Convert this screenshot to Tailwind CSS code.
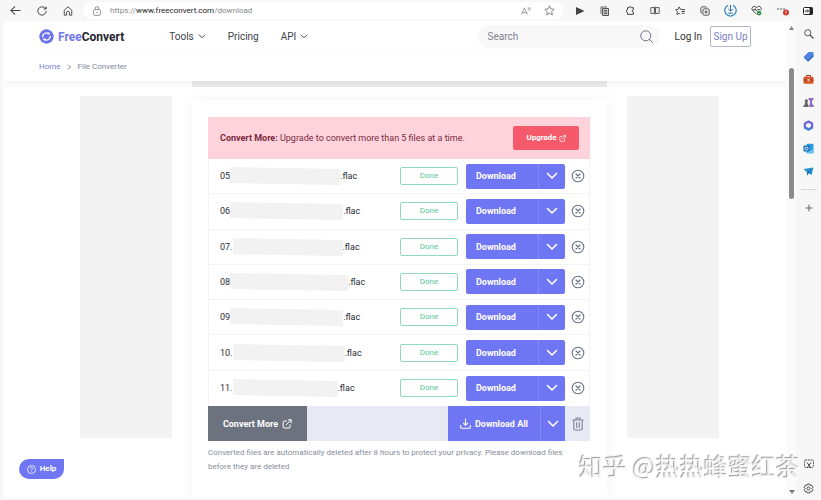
<!DOCTYPE html>
<html lang="en">
<head>
<meta charset="utf-8">
<title>FreeConvert – File Converter</title>
<script src="https://cdn.jsdelivr.net/npm/@tailwindcss/browser@4"></script>
</head>
<body class="h-screen overflow-hidden flex flex-col bg-[#f7f7f7] font-['Roboto',sans-serif] text-[#3d4148] text-[9px] leading-3">
<svg class="hidden">
  <symbol id="down" viewBox="0 0 12 8"><path d="M1.5 1.5 6 6l4.500-4.500" fill="none" stroke="currentColor" stroke-width="1.600" stroke-linecap="round" stroke-linejoin="round"/></symbol>
  <symbol id="close" viewBox="0 0 14 14"><g fill="none" stroke="currentColor" stroke-linecap="round"><circle cx="7" cy="7" r="5.800" stroke-width="1.100"/><path d="m5 5 4 4m0-4-4 4" stroke-width="1.200"/></g></symbol>
  <symbol id="ext" viewBox="0 0 12 12"><path d="M5.500 2.500H2.600a1.200 1.200 0 0 0-1.200 1.200v5.900a1.200 1.200 0 0 0 1.200 1.200h5.900a1.200 1.200 0 0 0 1.200-1.200V6.700M5 7l6-6M7.500 1H11v3.500" fill="none" stroke="currentColor" stroke-width="1.200" stroke-linecap="round" stroke-linejoin="round"/></symbol>
</svg>

<!-- Browser toolbar -->
<div class="h-[21px] shrink-0 flex items-center pr-2 pl-[10px] text-[#444]">
  <div class="flex items-center gap-4 shrink-0">
    <button aria-label="Back"><svg class="size-[11px] block" viewBox="0 0 12 12"><path d="M11.500 6H1m4.500-4.500L1 6l4.500 4.500" fill="none" stroke="currentColor" stroke-width="1.100"/></svg></button>
    <button aria-label="Reload"><svg class="size-[10px] block" viewBox="0 0 12 12"><path d="M11 6a5 5 0 1 1-1.600-3.700L11 3.500M11 .5v3H8" fill="none" stroke="currentColor" stroke-width="1.200"/></svg></button>
    <button aria-label="Home"><svg class="size-[10px] block" viewBox="0 0 12 12"><path d="M1.500 5 6 1l4.500 4v6H7.700V8A1.700 1.700 0 0 0 4.300 8v3H1.500z" fill="none" stroke="currentColor" stroke-width="1.100" stroke-linejoin="round"/></svg></button>
  </div>
  <div class="flex-1 ml-[10px] h-[17px] rounded-full bg-white flex items-center pl-[10px] pr-2 gap-[9px] min-w-0">
    <svg class="w-2 h-[10px] shrink-0 text-[#888]" viewBox="0 0 8 10"><g fill="none" stroke="currentColor" stroke-width=".9"><rect x=".6" y="3.500" width="6.800" height="5.800" rx="1"/><path d="M2.300 3.500V2.300a1.700 1.700 0 0 1 3.400 0v1.200"/></g><circle cx="4" cy="6.400" r=".7" fill="currentColor"/></svg>
    <div role="textbox" aria-label="Address" class="flex-1 text-[8px] text-[#888] whitespace-nowrap">https://<span class="text-[#222]">www.freeconvert.com</span>/download</div>
    <button class="text-[#888] mr-1" aria-label="Read aloud"><svg class="w-[10px] h-2 block" viewBox="0 0 10 8"><path d="M.5 7.500 3.400.8l2.900 6.700M1.500 5.400h3.800M7 .5q1 1 0 2.500M8.500.2q1.400 1.500 0 3.500" fill="none" stroke="currentColor" stroke-width=".8"/></svg></button>
    <button class="text-[#777]" aria-label="Favourite"><svg class="size-[11px] block" viewBox="0 0 12 12"><path d="m6 1 1.500 3.200 3.500.5-2.500 2.500.6 3.500L6 9l-3.100 1.700.6-3.500L1 4.700l3.500-.5z" fill="none" stroke="currentColor" stroke-linejoin="round"/></svg></button>
  </div>
  <div class="flex items-center gap-[15px] ml-3 shrink-0">
    <svg class="size-[10px]" viewBox="0 0 10 10"><path d="M1 1v8l8.500-4z" fill="#444"/></svg>
    <svg class="size-[10px]" viewBox="0 0 10 10"><path d="M2.500 2.500h6v7h-6z" fill="#ccc" stroke="#555"/><path d="M7 1H1v7M4 4.500h3M4 6h3M4 7.500h3" fill="none" stroke="#555" stroke-width=".9"/></svg>
    <svg class="size-[10px]" viewBox="0 0 12 12"><path d="M3 2h2a1.300 1.300 0 0 1 2.600 0H10v2.500a1.500 1.500 0 0 0 0 3V10H3V7.700a1.500 1.500 0 1 1 0-3z" fill="none" stroke="currentColor" stroke-width="1.200" stroke-linejoin="round"/></svg>
    <svg class="w-[10px] h-[9px]" viewBox="0 0 12 10"><path d="M1 1.500h4.300v7H1zM6.700 1.500H11v7H6.700zM6 .2v9.600" fill="none" stroke="currentColor" stroke-width="1"/></svg>
    <svg class="size-[10px]" viewBox="0 0 12 12"><path d="M7.500 4.300 8 4H6.800L5 1 3.700 4 .8 4.500l2.100 2.200-.6 3.500L5 8.700l1.200.8M8 4.300h4M7.500 6.500H12M8 8.700h3.500" fill="none" stroke="currentColor" stroke-width="1.100" stroke-linejoin="round"/></svg>
    <svg class="size-[10px]" viewBox="0 0 12 12"><g fill="none" stroke="currentColor" stroke-width="1.100"><rect x="3.500" y="3.500" width="7.500" height="7.500" rx="1.500"/><path d="M2.500 8.500A1.500 1.500 0 0 1 1 7V3a2 2 0 0 1 2-2h3.500a1.500 1.500 0 0 1 1.600 1M7.200 5.300V9.200M5.300 7.200h4"/></g></svg>
    <svg class="size-[13px] -mx-px" viewBox="0 0 13 13"><path d="M4 1.300a5.700 5.700 0 1 0 5 0" fill="none" stroke="#2d86c4" stroke-width="1.200"/><path d="M6.500 1v6M4.300 5l2.200 2.200L8.700 5M4.200 9.200h4.600" fill="none" stroke="#2d75ad"/></svg>
    <svg class="size-[11px]" viewBox="0 0 12 12"><path d="M6 10 1.700 5.800a2.500 2.500 0 0 1 3.800-3.500L6 3l.7-.7a2.500 2.500 0 0 1 3.800 3.300M1.500 5.500h2l1-1.500 1.200 2.500L7 5h3" fill="none" stroke="currentColor"/><circle cx="8.800" cy="8.800" r="2.600" fill="#2f8d48"/><path d="m7.600 8.800.9.900 1.500-1.700" fill="none" stroke="#fff" stroke-width=".6"/></svg>
    <svg class="w-3 h-[13px] -mr-px" viewBox="0 0 12 13"><g fill="#444"><circle cx="1" cy="5" r=".8"/><circle cx="4" cy="5" r=".8"/><circle cx="7" cy="5" r=".8"/></g><circle cx="9" cy="8.500" r="3" fill="#cb3a2e"/><path d="M9 6.800v2M9 9.500v.7" stroke="#fff" stroke-width=".8"/></svg>
    <svg class="w-[10px] h-2" viewBox="0 0 10 8"><rect x=".5" y=".5" width="9" height="7" rx="1" fill="#fff" stroke="#222"/><path d="M6.500.5h3v7h-3z" fill="#222"/><path d="M1.500 4h4M4 2.500 5.500 4 4 5.500" fill="none" stroke="#222" stroke-width=".9"/></svg>
  </div>
</div>

<div class="flex-1 min-h-0 flex pl-[3px] pb-[2px]">
  <!-- Web page -->
  <div class="relative flex-1 min-w-0 bg-white rounded-md overflow-hidden flex flex-col">
    <header class="relative z-10 bg-white shadow-[0_2px_8px_rgba(0,0,0,0.07)] pr-[45px] pl-9 shrink-0">
      <div class="h-8 flex items-center border-b border-[#fafafa] text-[10px]">
        <a href="#" class="flex items-center gap-1 text-[12px] font-bold text-[#23252d]">
          <svg class="size-[15px]" viewBox="0 0 15 15"><circle cx="7.500" cy="7.500" r="7.200" fill="#6c72ee"/><path d="M3.600 8.200a4 4 0 0 1 6-3.700M11.400 6.800a4 4 0 0 1-6 3.700" fill="none" stroke="#fff" stroke-width="1.300"/><path d="m9 3 2.500 2-3 .8zM6 12 3.500 10l3-.8z" fill="#fff"/></svg>
          <span><span class="text-[#7177ee]">Free</span>Convert</span>
        </a>
        <nav class="flex ml-[45px] gap-[22px]">
          <a href="#" class="flex items-center gap-1">Tools <svg class="w-2 h-[5px]"><use href="#down"/></svg></a>
          <a href="#">Pricing</a>
          <a href="#" class="flex items-center gap-1">API <svg class="w-2 h-[5px]"><use href="#down"/></svg></a>
        </nav>
        <div class="ml-auto w-[182px] h-[23px] rounded-full bg-[#f8f8f9] flex items-center pl-[10px] pr-[7px]">
          <input aria-label="Search" placeholder="Search" class="flex-1 min-w-0 bg-transparent outline-none placeholder:text-[#7d828e]">
          <button aria-label="Search"><svg class="size-[13px] block text-[#6b7280]" viewBox="0 0 13 13"><circle cx="5.800" cy="5.800" r="5" fill="none" stroke="currentColor"/><path d="m9.400 9.400 3 3" stroke="currentColor" stroke-linecap="round"/></svg></button>
        </div>
        <a href="#" class="ml-[15px] text-[#333]">Log In</a>
        <button class="ml-2 w-[41px] h-[21px] border border-[#b4b5c4] rounded-xs text-[#7b80c8]">Sign Up</button>
      </div>
      <div class="h-7 flex items-center gap-[6px] text-[8px] text-[#7f879c]">
        <a href="#" class="text-[#7a7fcf]">Home</a>
        <svg class="w-[5px] h-[6px]" viewBox="0 0 5 6"><path d="m1 .5 2.500 2.500L1 5.500" fill="none" stroke="currentColor"/></svg>
        <span>File Converter</span>
      </div>
    </header>

    <div class="w-[415px] h-[6px] bg-[#ececec] mx-auto shrink-0"></div>
    <main class="flex-1 flex justify-center gap-5 bg-white">
      <aside class="w-[92px] h-[342px] mt-[9px] bg-[#f3f3f3]"></aside>
      <section class="w-[415px] mt-[13px] mb-px pt-[17px] pl-4 pr-[17px] bg-white shadow-[0_0_16px_rgba(0,0,0,0.05)]">
        <div class="h-[42px] bg-[#fed3dc] flex items-center justify-between pl-3 pr-[11px] text-[#7a2940]">
          <p><b>Convert More:</b> Upgrade to convert more than 5 files at a time.</p>
          <button class="w-[66px] h-6 rounded-xs bg-[#f55a6b] text-white text-[8px] font-bold flex items-center justify-center gap-[2px]">Upgrade <svg class="size-[7px]"><use href="#ext"/></svg></button>
        </div>
        <ul id="files" class="h-[247px] grid grid-rows-7 border-x border-[#f4f4f5] divide-y divide-[#f4f4f5]"></ul>
        <div class="h-[35px] bg-[#e7e9f4] flex">
          <button class="w-[99px] bg-[#6c727e] text-white font-bold flex items-center justify-center gap-1">Convert More <svg class="size-[10px]"><use href="#ext"/></svg></button>
          <div class="ml-auto flex bg-[#6f76f3] text-white">
            <button class="w-[92px] font-bold flex items-center justify-center gap-1"><svg class="size-[11px]" viewBox="0 0 11 11"><path d="M5.500.8v6.400M3.200 5l2.300 2.300L7.800 5M.7 7v2.200q0 1 1 1h7.600q1 0 1-1V7" fill="none" stroke="currentColor" stroke-width="1.100"/></svg>Download All</button>
            <button class="w-[25px] border-l border-[#858bf6] flex items-center justify-center" aria-label="More download options"><svg class="w-3 h-2"><use href="#down"/></svg></button>
          </div>
          <button class="w-[25px] flex items-center justify-center text-[#7b8194]" aria-label="Delete all"><svg class="w-3 h-[14px]" viewBox="0 0 12 14"><path d="M.8 3h10.400M4 3V1h4v2M1.800 3v8.800q0 1.200 1.200 1.200h6q1.200 0 1.200-1.200V3M4.700 5.500v5M7.300 5.500v5" fill="none" stroke="currentColor" stroke-width="1.100" stroke-linecap="round"/></svg></button>
        </div>
        <p class="mt-[5px] pr-5 text-[8px] leading-[14px] text-[#868d9b]">Converted files are automatically deleted after 8 hours to protect your privacy. Please download files before they are deleted</p>
      </section>
      <aside class="w-[92px] h-[342px] mt-[9px] bg-[#f3f3f3]"></aside>
    </main>

    <button class="absolute z-20 left-4 bottom-[19px] w-[45px] h-5 rounded-full rounded-tr-xs bg-[#6f76f3] text-white text-[8px] font-bold flex items-center justify-center gap-1">
      <svg class="size-[9px]" viewBox="0 0 9 9"><circle cx="4.500" cy="4.500" r="4" fill="none" stroke="#fff" stroke-width=".8"/><path d="M3.300 3.600a1.200 1.200 0 1 1 1.800 1q-.6.300-.6.900M4.500 6.300v.6" fill="none" stroke="#fff" stroke-width=".8"/></svg>Help
    </button>
    <!-- Scrollbar -->
    <div class="absolute z-20 right-0 inset-y-0 w-[9px] bg-[#fbfbfb] flex flex-col items-center">
      <svg class="w-[5px] h-1 mt-[5px]" viewBox="0 0 5 4"><path d="M2.500 0 5 4H0z" fill="#888"/></svg>
      <div class="w-[5px] h-[131px] mt-[38px] rounded-full bg-[#8b8b8b]"></div>
      <svg class="w-[6px] h-1 mt-auto mb-1" viewBox="0 0 6 4"><path d="M3 4 6 0H0z" fill="#777"/></svg>
    </div>
  </div>

  <!-- Browser sidebar -->
  <aside class="w-[25px] shrink-0 flex flex-col items-center gap-3 pt-2 pb-1 text-[#555]">
    <svg class="size-[10px] shrink-0" viewBox="0 0 10 10"><circle cx="3.800" cy="3.800" r="3.100" fill="none" stroke="currentColor"/><path d="m6 6 3.500 3.500" stroke="currentColor" stroke-width="1.200"/></svg>
    <svg class="size-[11px] shrink-0" viewBox="0 0 11 11"><path d="M5.500 1h4.200q.8 0 .8.800V5.500L5.800 10q-.7.700-1.400 0L1 6.800q-.7-.7 0-1.400z" fill="#4e83dd"/><path d="M1 6.800 4.400 10q.7.700 1.400 0l4.700-4.500V4L5 9z" fill="#3767b8"/></svg>
    <svg class="size-[11px] shrink-0" viewBox="0 0 11 11"><path d="M3.500 3V1.500h4V3" fill="none" stroke="#8a3a1b"/><rect x=".5" y="2.800" width="10" height="7" rx="1" fill="#d9552a"/><path d="M.5 5.600h10v.9H.5z" fill="#9c3516"/><path d="M4.500 5h2v2.200h-2z" fill="#f0c9a8"/></svg>
    <svg class="size-[11px] shrink-0" viewBox="0 0 11 11"><circle cx="3.300" cy="4" r="1.700" fill="#666"/><path d="M2.300 5h2l.7 3h.6v2H.5V8h1z" fill="#666"/><path d="M5.500 1h5v1.500L9 4v2l1 2h.7v2H6.300V8L7 6V4L5.500 2.500z" fill="#9469c7"/></svg>
    <svg class="size-[11px] shrink-0" viewBox="0 0 11 11"><path d="m5.500 1.500 3.600 2v4l-3.600 2-3.600-2v-4z" fill="none" stroke="#6c63d6" stroke-width="2.200" stroke-linejoin="round"/><path d="m1.900 7.500 3.600 2 3.600-2" fill="none" stroke="#437fd9" stroke-width="2.200" stroke-linejoin="round"/></svg>
    <svg class="size-[11px] shrink-0" viewBox="0 0 11 11"><rect x="3.500" y=".8" width="7" height="9.400" rx="1" fill="#2c9be0"/><path d="m3.500 6 3.500 2 3.500-2v3.500q0 .7-.8.700H3.500z" fill="#66c6f3"/><rect x=".5" y="2.500" width="6" height="6" rx=".8" fill="#116db8"/><circle cx="3.500" cy="5.500" r="1.500" fill="none" stroke="#fff" stroke-width=".9"/></svg>
    <svg class="size-[11px] shrink-0" viewBox="0 0 11 11"><path d="M.5 3 10.500 1.500 8.500 9 5.500 7.300 4 9.500V6.300z" fill="#2590cf"/><path d="M4 6.300 8.500 3 5.500 7.300 4 9.500z" fill="#176b9f"/></svg>
    <hr class="w-4 border-[#d5d5d5]">
    <svg class="size-[8px] mt-[2px] shrink-0" viewBox="0 0 8 8"><path d="M4 .5v7M.5 4h7" stroke="currentColor" stroke-width=".9"/></svg>
    <svg class="size-[10px] mt-auto shrink-0" viewBox="0 0 10 10"><rect x=".6" y="1" width="8.800" height="7.500" rx="1" fill="none" stroke="#444" stroke-dasharray="1.600 .8"/><path d="m3 3.500 4 5.500M7 3.500 3 9" stroke="#444"/></svg>
    <svg class="size-[11px] mt-[2px] shrink-0" viewBox="0 0 12 12"><path d="m4.600 1.200h2.800l.4 1.500 1.500-.4 1.500 2.400L9.700 6l1.100 1.300-1.500 2.400-1.500-.4-.4 1.500H4.600l-.4-1.500-1.500.4-1.500-2.400L2.300 6 1.200 4.700l1.500-2.400 1.500.4z" fill="none" stroke="#444" stroke-linejoin="round"/><circle cx="6" cy="6" r="1.700" fill="none" stroke="#444"/></svg>
  </aside>
</div>

<div class="fixed z-30 right-[21px] bottom-4 font-['Noto_Sans_CJK_SC',sans-serif] text-[24px] leading-9 font-medium whitespace-nowrap text-white/80 [text-shadow:-1px_-1px_1px_rgba(90,90,90,0.6)]">知乎 @热热蜂蜜红茶</div>

<script>
const files = [["05", 110], ["06", 113], ["07.", 110], ["08", 118], ["09", 113], ["10.", 112], ["11.", 105]];
document.getElementById("files").innerHTML = files.map(([n, w]) => `
  <li class="flex items-center pl-[11px] pr-1 text-[#2b2d33]">
    <span>${n}</span><span class="h-4 bg-[#f2f2f2] rotate-1" style="width:${w}px"></span><span>.flac</span>
    <span class="ml-auto w-[58px] h-[18px] rounded-xs border border-[#8fdcb9] text-[#55c794] text-[8px] flex items-center justify-center">Done</span>
    <div class="ml-2 h-[25px] flex rounded-xs bg-[#6f76f3] text-white">
      <button class="w-[72px] pl-[10px] text-left font-bold">Download</button>
      <button class="w-[27px] border-l border-[#858bf6] flex items-center justify-center" aria-label="Download options for file ${n}"><svg class="w-3 h-2"><use href="#down"/></svg></button>
    </div>
    <button class="ml-[6px] text-[#6b7286]" aria-label="Remove file ${n}"><svg class="size-[14px] block"><use href="#close"/></svg></button>
  </li>`).join("");
</script>
</body>
</html>
